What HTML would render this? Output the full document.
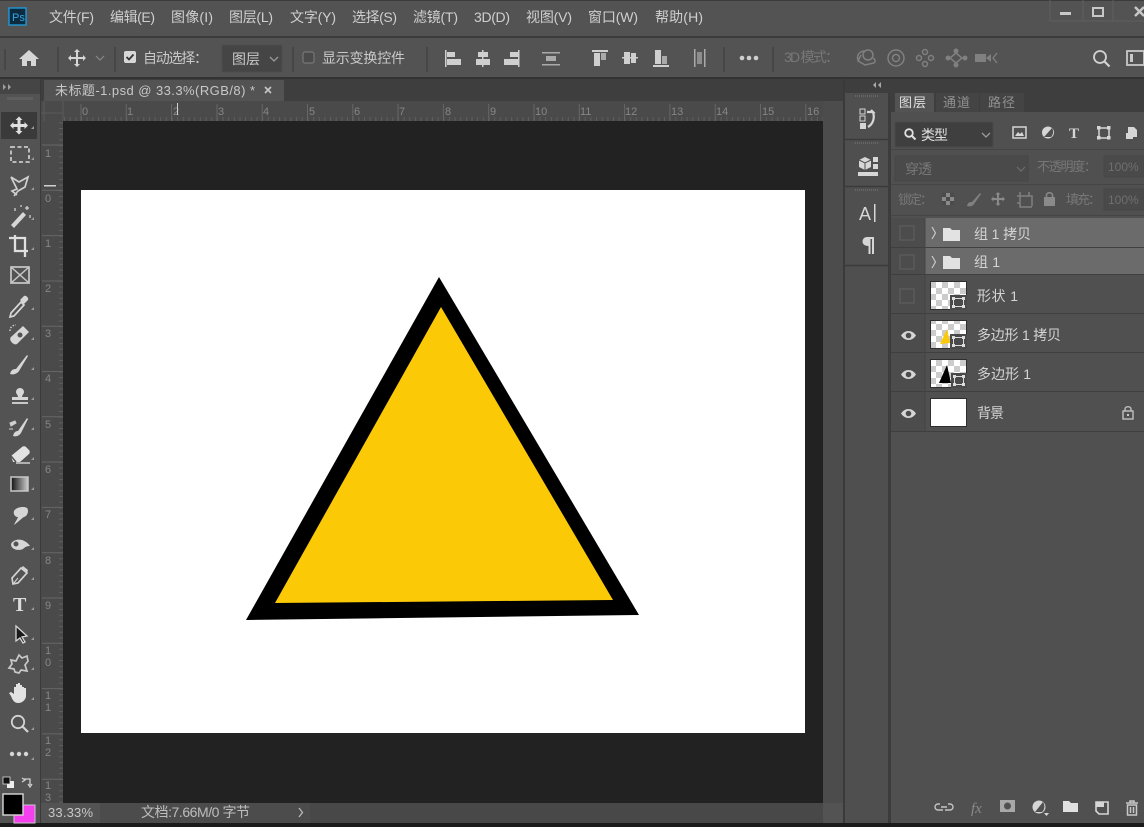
<!DOCTYPE html>
<html><head><meta charset="utf-8"><style>
html,body{margin:0;padding:0;background:#535353;width:1144px;height:827px;overflow:hidden}
svg{display:block;position:absolute;left:0;top:0;filter:blur(.35px)}
text{font-family:"Liberation Sans","Noto Sans CJK SC",sans-serif}
.m{font-size:14px;fill:#cfcfcf}
.o{font-size:14px;fill:#c9c9c9}
.d{font-size:13px;fill:#777}
.r{font-size:11px;fill:#868686}
.l{font-size:14px;fill:#d4d4d4}
.i{fill:none;stroke:#d6d6d6;stroke-width:1.6}
.f{fill:#d6d6d6}
.g{fill:none;stroke:#808080;stroke-width:1.5}
.gf{fill:#808080}
.c{fill:none;stroke:#3f3f3f;stroke-width:1.2}
</style></head><body>
<svg width="1144" height="827" viewBox="0 0 1144 827" xmlns="http://www.w3.org/2000/svg">
<defs>
<pattern id="hr" x="81" y="0" width="5.66" height="5" patternUnits="userSpaceOnUse"><rect width="1" height="5" fill="#5e5e5e"/></pattern>
<pattern id="vr" x="0" y="145" width="5" height="5.66" patternUnits="userSpaceOnUse"><rect width="5" height="1" fill="#5e5e5e"/></pattern>
<pattern id="ck" x="0" y="0" width="12" height="12" patternUnits="userSpaceOnUse"><rect width="12" height="12" fill="#fff"/><rect width="6" height="6" fill="#ccc"/><rect x="6" y="6" width="6" height="6" fill="#ccc"/></pattern>
</defs>

<!-- base -->
<rect width="1144" height="827" fill="#535353"/>
<rect y="0" width="1144" height="1" fill="#3c3c3c"/>
<rect y="36" width="1144" height="2" fill="#3b3b3b"/>
<rect y="77" width="1144" height="2" fill="#333"/>

<!-- menu -->
<rect x="9" y="8" width="17" height="17" fill="#0d2a3f" stroke="#1f9ad6" stroke-width="1.4"/>
<text x="12" y="21" font-size="11" fill="#31a8e8">Ps</text>
<text class="m" x="49" y="22" textLength="45">文件(F)</text>
<text class="m" x="110" y="22" textLength="45">编辑(E)</text>
<text class="m" x="171" y="22" textLength="42">图像(I)</text>
<text class="m" x="229" y="22" textLength="44">图层(L)</text>
<text class="m" x="290" y="22" textLength="46">文字(Y)</text>
<text class="m" x="352" y="22" textLength="45">选择(S)</text>
<text class="m" x="413" y="22" textLength="45">滤镜(T)</text>
<text class="m" x="474" y="22" textLength="36">3D(D)</text>
<text class="m" x="526" y="22" textLength="46">视图(V)</text>
<text class="m" x="588" y="22" textLength="50">窗口(W)</text>
<text class="m" x="655" y="22" textLength="48">帮助(H)</text>

<!-- window buttons -->
<path d="M1050 0V21H1144M1083 0V21M1113 0V21" fill="none" stroke="#5f5f5f"/>
<rect x="1060" y="12" width="11" height="3" fill="#c8c8c8"/>
<rect x="1093" y="8" width="10" height="8" fill="none" stroke="#c8c8c8" stroke-width="2"/>
<path d="M1135 7l9 9M1144 7l-9 9" stroke="#c8c8c8" stroke-width="2.4" fill="none"/>

<!-- options bar -->
<path d="M5 49V70M58 47V72M115 47V72M293 47V72M427 47V72M724 47V72M773 47V72" stroke="#3f3f3f" stroke-width="1.2"/>
<path d="M29 50l-10 9h3v7h5v-5h4v5h5v-7h3z" class="f"/>
<g transform="translate(77,58)"><path class="f" d="M0-9l3 3H1v5h5V-3l3 3-3 3V1H1v5h2l-3 3-3-3h2V1h-5v2l-3-3 3-3v2h5V-6h-2z"/></g>
<path d="M96 56l4 4 4-4" class="c" style="stroke:#888"/>
<rect x="124" y="51" width="12" height="12" rx="2" fill="#d8d8d8"/>
<path d="M126.500 57l2.500 2.500 4.500-5" stroke="#333" stroke-width="1.8" fill="none"/>
<text class="o" x="143" y="63" textLength="65">自动选择：</text>
<rect x="222" y="45" width="60" height="27" fill="#454545" stroke="#4c4c4c"/>
<text class="o" x="232" y="64" textLength="28">图层</text>
<path d="M270 57l4 4 4-4" fill="none" stroke="#9a9a9a" stroke-width="1.3"/>
<rect x="303" y="52" width="11" height="11" rx="2" fill="#4a4a4a" stroke="#777" stroke-width="1.2"/>
<text class="o" x="322" y="63" textLength="83">显示变换控件</text>

<g fill="#cfcfcf">
<rect x="445" y="50" width="1.500" height="17"/><rect x="447" y="52" width="8" height="5"/><rect x="447" y="59" width="14" height="6"/>
<rect x="482" y="50" width="1.500" height="17"/><rect x="478" y="52" width="10" height="5"/><rect x="476" y="59" width="14" height="6"/>
<rect x="518" y="50" width="1.500" height="17"/><rect x="510" y="52" width="8" height="5"/><rect x="504" y="59" width="14" height="6"/>
<rect x="542" y="52" width="18" height="1.500" fill="#aaa"/><rect x="542" y="64" width="18" height="1.500" fill="#aaa"/><rect x="546" y="56" width="10" height="5" fill="#aaa"/>
<rect x="592" y="50" width="16" height="2"/><rect x="594" y="53" width="6" height="13"/><rect x="601" y="53" width="5" height="7" fill="#aaa"/>
<rect x="622" y="57" width="16" height="1.500"/><rect x="624" y="52" width="6" height="12"/><rect x="631" y="53" width="5" height="10"/>
<rect x="653" y="65" width="16" height="2"/><rect x="655" y="50" width="6" height="14"/><rect x="662" y="56" width="5" height="8" fill="#aaa"/>
<rect x="694" y="49" width="1.500" height="18" fill="#aaa"/><rect x="704" y="49" width="1.500" height="18" fill="#aaa"/><rect x="697" y="52" width="5" height="12" fill="#8e8e8e"/>
<circle cx="742" cy="58" r="2.300"/><circle cx="749" cy="58" r="2.300"/><circle cx="756" cy="58" r="2.300"/>
</g>
<text class="d" x="784" y="62" textLength="55" style="font-size:14px">3D 模式：</text>
<g class="g">
<circle cx="868" cy="55" r="5"/><path d="M858 60c-2-6 3-9 7-9M861 55l-3 6 7 4 9-2c2-2 1-4-1-5"/>
<circle cx="896" cy="58" r="8"/><circle cx="896" cy="58" r="3.500"/>
<circle cx="925" cy="52" r="2.500"/><circle cx="925" cy="64" r="2.500"/><circle cx="919" cy="58" r="2.500"/><circle cx="931" cy="58" r="2.500"/>
<path d="M950 58l6-5 6 5-6 5z"/>
</g>
<g class="gf"><circle cx="956" cy="51" r="2.500"/><circle cx="956" cy="65" r="2.500"/><circle cx="948" cy="58" r="2.500"/><circle cx="965" cy="58" r="2.500"/>
<rect x="975" y="54" width="11" height="8"/><path d="M986 58l5-4v8z"/><path d="M997 53l-4 5 4 5" fill="none" stroke="#808080" stroke-width="1.300"/></g>
<circle cx="1100" cy="57" r="6" fill="none" stroke="#d2d2d2" stroke-width="1.800"/><path d="M1104.500 61.500l5 5" stroke="#d2d2d2" stroke-width="2.200"/>
<rect x="1127" y="51" width="17" height="14" fill="none" stroke="#c8c8c8" stroke-width="1.800"/><rect x="1130" y="54" width="3" height="8" fill="#c8c8c8"/>

<!-- tab strip -->
<rect x="0" y="79" width="843" height="22" fill="#3e3e3e"/>
<rect x="0" y="79" width="40" height="15" fill="#454545"/>
<rect x="40" y="79" width="1" height="748" fill="#3a3a3a"/>
<path d="M3 84l3 3-3 3zM8 84l3 3-3 3z" fill="#a0a0a0"/>
<rect x="44" y="80" width="240" height="21" fill="#535353"/>
<text x="55" y="95" font-size="13" fill="#c8c8c8" textLength="200">未标题-1.psd @ 33.3%(RGB/8) *</text>
<path d="M265 87l6 6M271 87l-6 6" stroke="#c4c4c4" stroke-width="1.700"/>

<!-- toolbar -->
<rect x="0" y="94" width="40" height="733" fill="#535353"/>
<rect x="7" y="97" width="26" height="3" fill="#5e5e5e"/>

<!-- rulers -->
<rect x="41" y="101" width="782" height="20" fill="#4a4a4a"/>
<rect x="41" y="101" width="22" height="702" fill="#4a4a4a"/>
<rect x="63" y="117" width="760" height="4" fill="url(#hr)"/>
<rect x="59" y="121" width="4" height="682" fill="url(#vr)"/>
<path d="M44 101V121M63 101V121M41 113H63" stroke="#5a5a5a"/>
<path d="M81 104v17M126.300 104v17M171.600 104v17M217 104v17M262.200 104v17M307.500 104v17M352.800 104v17M398 104v17M443.400 104v17M488.700 104v17M534 104v17M579.300 104v17M624.600 104v17M669.900 104v17M715.200 104v17M760.500 104v17M805.800 104v17" stroke="#666"/>
<path d="M42 145h21M42 190.300h21M42 235.600h21M42 281h21M42 326.200h21M42 371.500h21M42 416.800h21M42 462h21M42 507.400h21M42 552.700h21M42 598h21M42 643.300h21M42 688.600h21M42 733.900h21M42 779.200h21" stroke="#666"/>
<g class="r">
<text x="82" y="115">0</text><text x="127" y="115">1</text><text x="173" y="115">2</text><text x="218" y="115">3</text><text x="263" y="115">4</text><text x="309" y="115">5</text><text x="354" y="115">6</text><text x="399" y="115">7</text><text x="445" y="115">8</text><text x="490" y="115">9</text>
<text x="535" y="115">10</text><text x="580" y="115">11</text><text x="625" y="115">12</text><text x="671" y="115">13</text><text x="716" y="115">14</text><text x="762" y="115">15</text><text x="807" y="115">16</text>
<text x="45" y="157">1</text><text x="45" y="202">0</text><text x="45" y="247">1</text><text x="45" y="292">2</text><text x="45" y="337">3</text><text x="45" y="382">4</text><text x="45" y="428">5</text><text x="45" y="473">6</text><text x="45" y="518">7</text><text x="45" y="564">8</text><text x="45" y="609">9</text>
<text x="45" y="654">1</text><text x="45" y="666">0</text><text x="45" y="699">1</text><text x="45" y="711">1</text><text x="45" y="744">1</text><text x="45" y="756">2</text><text x="45" y="789">1</text><text x="45" y="801">3</text>
</g>
<rect x="177" y="103" width="1" height="12" fill="#d0d0d0"/>
<rect x="44" y="185" width="12" height="1.500" fill="#d0d0d0"/>

<!-- canvas -->
<rect x="63" y="121" width="760" height="682" fill="#222"/>
<rect x="81" y="190" width="724" height="543" fill="#fff"/>
<polygon points="439,277 639,615 246,620" fill="#000"/>
<polygon points="441,307 613,600 275,603" fill="#fbc905"/>

<!-- scroll col + right dock -->
<rect x="823" y="101" width="20" height="702" fill="#4c4c4c"/>
<rect x="823" y="79" width="321" height="14" fill="#3e3e3e"/>
<rect x="843" y="79" width="2" height="748" fill="#3a3a3a"/>
<path d="M876 82l-3 3 3 3zM881 82l-3 3 3 3z" fill="#a8a8a8"/>
<rect x="845" y="93" width="43" height="734" fill="#4f4f4f"/>
<rect x="888" y="93" width="3" height="734" fill="#3c3c3c"/>
<path d="M845 139.500h43M845 186.500h43M845 265.500h43" stroke="#3a3a3a" stroke-width="1.500"/>
<path d="M855 96h24M855 143h24M855 190h24" stroke="#666" stroke-width="2" stroke-dasharray="1 1"/>
<g transform="translate(860,109)">
<rect x="0" y="0" width="5" height="5" fill="none" stroke="#d6d6d6"/><rect x="0" y="7" width="5" height="5" fill="none" stroke="#d6d6d6"/><rect x="0" y="14" width="6" height="6" fill="#d6d6d6"/>
<path d="M7 3h6l-2-2M13 3c2 6 0 12-5 15" fill="none" stroke="#d6d6d6" stroke-width="2.200"/>
</g>
<g transform="translate(858,156)">
<path d="M1 4l6-3 6 3v7l-6 3-6-3z" fill="#d6d6d6"/><path d="M1 4l6 3 6-3M7 7v7" stroke="#4f4f4f" fill="none"/>
<rect x="15" y="1" width="5" height="5" fill="#d6d6d6"/><rect x="15" y="8" width="5" height="5" fill="#d6d6d6"/>
<rect x="0" y="16" width="20" height="4" fill="#d6d6d6"/>
</g>
<text x="859" y="220" font-size="18" fill="#d6d6d6">A</text><rect x="874" y="204" width="1.500" height="18" fill="#d6d6d6"/>
<path d="M867 237h7v17h-2v-15h-1.500v15h-2v-8c-4 0-6-2-6-4.500s2-4.500 4.500-4.500z" fill="#d6d6d6"/>

<!-- layers panel -->
<rect x="891" y="93" width="253" height="19" fill="#3e3e3e"/>
<rect x="891" y="112" width="253" height="711" fill="#505050"/>
<rect x="895" y="93" width="39" height="19" fill="#535353"/>
<rect x="936" y="93" width="43" height="19" fill="#444"/>
<rect x="980" y="93" width="44" height="19" fill="#444"/>
<text x="899" y="107" font-size="13" fill="#e0e0e0" textLength="27">图层</text>
<text x="943" y="107" font-size="13" fill="#909090" textLength="27">通道</text>
<text x="988" y="107" font-size="13" fill="#909090" textLength="27">路径</text>

<rect x="895" y="122" width="98" height="25" fill="#3f3f3f" stroke="#4a4a4a"/>
<circle cx="909" cy="133" r="3.800" fill="none" stroke="#e0e0e0" stroke-width="1.800"/><path d="M912 136l3.500 3.500" stroke="#e0e0e0" stroke-width="2"/>
<text x="921" y="140" font-size="14" fill="#e0e0e0" textLength="27">类型</text>
<path d="M982 133l4 4 4-4" fill="none" stroke="#9a9a9a" stroke-width="1.300"/>
<rect x="1013" y="127" width="13" height="11" fill="none" stroke="#d6d6d6" stroke-width="1.500"/><path d="M1015 136l3-4 2 2 2-2 2 4z" class="f"/>
<circle cx="1048" cy="132.500" r="6" class="f"/><path d="M1044 137l8-9c2 3 1 7-1 9z" fill="#4f4f4f"/>
<text x="1069" y="138" font-size="15" font-weight="bold" fill="#d6d6d6" style="font-family:'Liberation Serif',serif">T</text>
<rect x="1099" y="128" width="10" height="10" fill="none" stroke="#d6d6d6" stroke-width="1.500"/><g class="f"><rect x="1097" y="126" width="3.500" height="3.500"/><rect x="1107" y="126" width="3.500" height="3.500"/><rect x="1097" y="136" width="3.500" height="3.500"/><rect x="1107" y="136" width="3.500" height="3.500"/></g>
<path d="M1128 127h6l3 3v7h-4v2h-7v-6h2z" class="f"/>

<path d="M891 149.500H1144M891 184.500H1144M891 215.500H1144" stroke="#454545"/>
<rect x="895" y="156" width="133" height="25" fill="#4a4a4a" stroke="#464646"/>
<text x="905" y="174" font-size="14" fill="#787878" textLength="27">穿透</text>
<path d="M1017 167l4 4 4-4" fill="none" stroke="#6d6d6d" stroke-width="1.200"/>
<text x="1037" y="171" class="d" textLength="60">不透明度：</text>
<rect x="1104" y="156" width="40" height="21" fill="#4a4a4a" stroke="#464646"/>
<text x="1108" y="171" font-size="12" fill="#6f6f6f">100%</text>

<text x="898" y="204" class="d" textLength="35">锁定：</text>
<rect x="942" y="193" width="12" height="12" fill="#8a8a8a"/><path d="M942 193h4v4h-4zM950 193h4v4h-4zM946 197h4v4h-4zM942 201h4v4h-4zM950 201h4v4h-4z" fill="#4a4a4a"/>
<path d="M967 206c1-4 3-4 5-4l8-9 1 1-7 10c-1 2-4 3-7 2z" class="gf"/>
<path d="M998 192l2.500 2.500h-1.500v3.500h3.500v-1.500l2.500 2.500-2.500 2.500v-1.500h-3.500v3.500h1.500l-2.500 2.500-2.500-2.500h1.500v-3.500h-3.500v1.500l-2.500-2.500 2.500-2.500v1.500h3.500v-3.500h-1.500z" fill="#8a8a8a"/>
<path d="M1017 196h15v10M1020 192v15h12M1017 203h3M1029 192v4" fill="none" stroke="#808080" stroke-width="1.500"/>
<rect x="1044" y="197" width="11" height="9" fill="#8a8a8a"/><path d="M1046.500 197v-2c0-3 6-3 6 0v2" fill="none" stroke="#8a8a8a" stroke-width="1.500"/>
<text x="1066" y="204" class="d" textLength="35">填充：</text>
<rect x="1104" y="189" width="40" height="21" fill="#4a4a4a" stroke="#464646"/>
<text x="1108" y="204" font-size="12" fill="#6f6f6f">100%</text>

<!-- layers -->
<rect x="891" y="218" width="34" height="213" fill="#4c4c4c"/>
<rect x="925" y="218" width="219" height="29" fill="#6b6b6b"/>
<rect x="925" y="248" width="219" height="26" fill="#6b6b6b"/>
<rect x="925" y="275" width="219" height="156" fill="#505050"/>
<path d="M891 247.500H1144M891 274.500H1144M891 313.500H1144M891 352.500H1144M891 391.500H1144M891 431.500H1144" stroke="#3f3f3f"/>
<rect x="924.500" y="218" width="1" height="213" fill="#444"/>
<g fill="none" stroke="#5d5d5d" stroke-width="1.300">
<rect x="900" y="226" width="14" height="14"/><rect x="900" y="255" width="14" height="14"/><rect x="900" y="289" width="14" height="14"/>
</g>
<path d="M932 227l3.500 6-3.500 6M932 256l3.500 6-3.500 6" fill="none" stroke="#c8c8c8" stroke-width="1.200"/>
<path d="M943 228h7l2 2h8v11h-17z" fill="#e2e2e2"/>
<path d="M943 256h7l2 2h8v11h-17z" fill="#e2e2e2"/>
<text x="974" y="239" class="l" textLength="57">组 1 拷贝</text>
<text x="974" y="267" class="l" textLength="26">组 1</text>

<rect x="930.500" y="281.500" width="36" height="28" fill="url(#ck)" stroke="#2e2e2e"/>
<rect x="950" y="295" width="17" height="15" fill="#4a4a4a"/><rect x="953.500" y="298.500" width="10" height="8" fill="none" stroke="#ddd"/>
<g fill="#ddd"><rect x="952" y="297" width="3" height="3"/><rect x="962" y="297" width="3" height="3"/><rect x="952" y="305" width="3" height="3"/><rect x="962" y="305" width="3" height="3"/></g>
<rect x="930.500" y="320.500" width="36" height="28" fill="url(#ck)" stroke="#2e2e2e"/>
<polygon points="947,329 950,343 940,344" fill="#fbc905"/>
<rect x="950" y="334" width="17" height="15" fill="#4a4a4a"/><rect x="953.500" y="337.500" width="10" height="8" fill="none" stroke="#ddd"/>
<g fill="#ddd"><rect x="952" y="336" width="3" height="3"/><rect x="962" y="336" width="3" height="3"/><rect x="952" y="344" width="3" height="3"/><rect x="962" y="344" width="3" height="3"/></g>
<rect x="930.500" y="359.500" width="36" height="28" fill="url(#ck)" stroke="#2e2e2e"/>
<polygon points="947,365 951,383 939,383" fill="#000"/>
<rect x="951" y="373" width="16" height="15" fill="#4a4a4a"/><rect x="954.500" y="376.500" width="9" height="8" fill="none" stroke="#ddd"/>
<g fill="#ddd"><rect x="953" y="375" width="3" height="3"/><rect x="962" y="375" width="3" height="3"/><rect x="953" y="383" width="3" height="3"/><rect x="962" y="383" width="3" height="3"/></g>
<rect x="930.500" y="398.500" width="36" height="28" fill="#fff" stroke="#2e2e2e"/>

<text x="977" y="301" class="l" textLength="41">形状 1</text>
<text x="977" y="340" class="l" textLength="84">多边形 1 拷贝</text>
<text x="977" y="379" class="l" textLength="54">多边形 1</text>
<text x="977" y="418" class="l" textLength="27">背景</text>

<path d="M901 335.500c4-6 11-6 15 0c-4 6-11 6-15 0z" fill="#d6d6d6"/><circle cx="908.500" cy="335.500" r="2.800" fill="#4c4c4c"/>
<path d="M901 374.500c4-6 11-6 15 0c-4 6-11 6-15 0z" fill="#d6d6d6"/><circle cx="908.500" cy="374.500" r="2.800" fill="#4c4c4c"/>
<path d="M901 413.500c4-6 11-6 15 0c-4 6-11 6-15 0z" fill="#d6d6d6"/><circle cx="908.500" cy="413.500" r="2.800" fill="#4c4c4c"/>
<rect x="1123" y="411" width="10" height="8" fill="none" stroke="#c8c8c8" stroke-width="1.300"/><path d="M1125 411v-2c0-3 6-3 6 0v2" fill="none" stroke="#c8c8c8" stroke-width="1.300"/><rect x="1127" y="414" width="2" height="2" fill="#c8c8c8"/>

<!-- layers footer -->
<path d="M940 804h-2a3 3 0 000 6h5M948 804h2a3 3 0 010 6h-5M941 807h6" fill="none" stroke="#c4c4c4" stroke-width="1.400"/>
<text x="971" y="813" font-size="15" font-style="italic" fill="#8a8a8a" style="font-family:'Liberation Serif',serif">fx</text>
<rect x="1000" y="800" width="15" height="12" fill="#a8a8a8"/><circle cx="1007.500" cy="806" r="3.500" fill="#505050"/>
<circle cx="1039" cy="807" r="6.500" fill="#d6d6d6"/><path d="M1035 812l8-10c2 3 2 7-1 10z" fill="#505050"/><path d="M1044 813h5l-2.500 3z" fill="#d6d6d6"/>
<path d="M1063 801h6l2 2h7v9h-15z" fill="#e0e0e0"/>
<path d="M1096 802h12v12h-9l-3-3z" fill="none" stroke="#d6d6d6" stroke-width="1.600"/><path d="M1096 802h8v5h-8z" fill="#d6d6d6"/>
<path d="M1126 803h12M1130 803v-2h4v2M1127.500 805h9v10h-9zM1130.500 807v6M1133.500 807v6" fill="none" stroke="#c8c8c8" stroke-width="1.500"/>

<!-- status bar -->
<rect x="41" y="803" width="802" height="20" fill="#535353"/>
<rect x="100" y="803" width="210" height="20" fill="#4c4c4c"/>
<rect x="310" y="803" width="513" height="20" fill="#484848"/>
<text x="48" y="817" font-size="13" fill="#c8c8c8" textLength="45">33.33%</text>
<text x="141" y="817" font-size="14" fill="#bdbdbd" textLength="109">文档:7.66M/0 字节</text>
<path d="M299 808l3.500 4.500-3.500 4.500" fill="none" stroke="#b8b8b8" stroke-width="1.300"/>
<rect y="823" width="1144" height="4" fill="#1b1b1b"/>

<!-- tools -->
<rect x="1" y="112" width="36" height="27" fill="#3a3a3a"/>
<path d="M19 116.500l3.500 3.500H20.500v4h4v-2l3.500 3.500-3.500 3.500v-2h-4v4h2l-3.500 3.500-3.500-3.500h2v-4h-4v2l-3.500-3.500 3.500-3.500v2h4v-4h-2z" fill="#e0e0e0"/>
<rect x="11" y="147" width="18" height="15" fill="none" stroke="#c8c8c8" stroke-width="1.800" stroke-dasharray="4 2.500"/>
<path d="M11 177l8 5 9-5-3 10-7 4-4 5M11 177l6 12-5 2 5 4" fill="none" stroke="#d0d0d0" stroke-width="1.700"/>
<path d="M11 225l12-13 3 3-12 13z" class="f"/><path d="M27 206v4M25 208h4M15 208v3M30 215v3M21 205v2" stroke="#d0d0d0" stroke-width="1.300"/>
<path d="M9 238h6v13h13M15 235v3M15 238h10v13M25 251v6" fill="none" stroke="#e0e0e0" stroke-width="2.300"/>
<rect x="11" y="267" width="18" height="16" fill="none" stroke="#c8c8c8" stroke-width="1.700"/><path d="M11 267l18 16M29 267l-18 16" stroke="#c8c8c8" stroke-width="1.500"/>
<path d="M11 313l10-11 3 3-10 11-4 1z" fill="none" stroke="#d6d6d6" stroke-width="1.700"/><path d="M20 300l4-4c2-1 5 2 4 4l-4 4z" class="f"/>
<path d="M11 337l12-11 6 6-12 12c-3 2-9-4-6-7z" class="f"/><circle cx="20" cy="335" r="2.500" fill="#535353"/><path d="M10 331c0-4 3-6 6-6" stroke="#c8c8c8" stroke-width="1.500" stroke-dasharray="1.500 1.500" fill="none"/>
<path d="M10 374c1-4 3-5 6-5l11-14 1 1-9 15c-2 3-6 4-9 3z" class="f"/>
<path d="M16 392a4 4 0 118 0c0 2-2 3-2 5h6v3H12v-3h6c0-2-2-3-2-5z" class="f"/><rect x="12" y="402" width="16" height="2" fill="#c8c8c8"/>
<path d="M13 436c1-4 3-5 5-5l9-13 1 1-7 14c-2 3-5 4-8 3z" class="f"/><path d="M10 423l5-2 1 2-5 3zM9 429h4" stroke="#d0d0d0" fill="#d0d0d0"/>
<path d="M11 456l11-9c1-1 3-1 4 0l3 3c1 1 1 3 0 4l-9 8h-7z" fill="#e2e2e2"/><path d="M11 456l5 6" stroke="#535353" stroke-width="1.500"/><path d="M16 463h14" stroke="#d0d0d0" stroke-width="1.500"/>
<defs><linearGradient id="gr"><stop offset="0" stop-color="#111"/><stop offset="1" stop-color="#ccc"/></linearGradient></defs>
<rect x="11" y="477" width="17" height="14" fill="url(#gr)" stroke="#c8c8c8" stroke-width="1.500"/>
<path d="M14 525c1-3 3-5 4-8-3 0-5-3-4-6 2-4 10-5 13-3 2 2 1 8-3 9-2 1-7 6-10 8z" class="f"/>
<path d="M11 544c2-4 7-5 11-4 3 1 6 3 8 6-3 0-5 1-7 3-4 2-12 1-12-5z" class="f"/><circle cx="16" cy="544" r="2.500" fill="#535353"/>
<path d="M13 584l-1-6 9-10 6 5-9 10z" fill="none" stroke="#d2d2d2" stroke-width="1.700"/><path d="M13 584l5-6" stroke="#d2d2d2"/><path d="M21 568l2-2 5 4-1 3" fill="#d2d2d2"/>
<text x="13" y="611" font-size="20" font-weight="bold" fill="#dcdcdc" style="font-family:'Liberation Serif',serif">T</text>
<path d="M16 626l0 15 4-3 3 5 2-1-3-5 5-1z" fill="#1a1a1a" stroke="#d6d6d6" stroke-width="1.300"/>
<path d="M11 660l5 1 3-6 3 3 5-2 1 5-3 4 2 6-6-1-2 3-4-1-1-3-5-1 3-4z" fill="none" stroke="#c8c8c8" stroke-width="1.700"/>
<path d="M11 696l-2-3 2-1 3 2v-7h2v-3h2v-1h2v2h2v2h2v1h2v8c0 3-3 7-8 7-4 0-6-4-7-7z" fill="#e2e2e2"/>
<circle cx="18" cy="722" r="6.200" fill="none" stroke="#d2d2d2" stroke-width="1.800"/><path d="M22.500 726.500l5.500 5.500" stroke="#d2d2d2" stroke-width="2.200"/>
<circle cx="12" cy="754" r="2.200" class="f"/><circle cx="19" cy="754" r="2.200" class="f"/><circle cx="26" cy="754" r="2.200" class="f"/>
<g fill="#9e9e9e"><path d="M31 129h3v-3zM31 160h3v-3zM31 190h3v-3zM31 220h3v-3zM31 250h3v-3zM31 310h3v-3zM31 340h3v-3zM31 370h3v-3zM31 400h3v-3zM31 430h3v-3zM31 460h3v-3zM31 490h3v-3zM31 520h3v-3zM31 550h3v-3zM31 580h3v-3zM31 610h3v-3zM31 640h3v-3zM31 670h3v-3zM31 700h3v-3zM31 730h3v-3zM31 760h3v-3z"/></g>

<!-- colours -->
<rect x="7" y="781" width="7" height="7" fill="#eee"/><rect x="3" y="777" width="7" height="7" fill="#111" stroke="#ddd" stroke-width=".8"/>
<path d="M23 779h7v6M22 778l3 2-3 2M28 784l2 3 2-3" fill="none" stroke="#d0d0d0" stroke-width="1.300"/>
<rect x="14" y="805" width="21" height="18" fill="#f540f0" stroke="#c8c8c8"/>
<rect x="3" y="794" width="20" height="21" fill="#000" stroke="#d8d8d8" stroke-width="1.400"/>
</svg>
</body></html>
